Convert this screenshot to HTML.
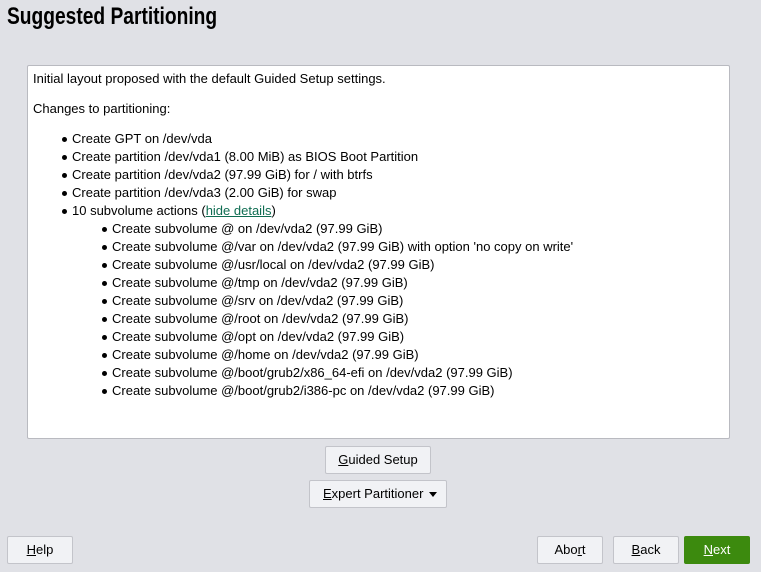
<!DOCTYPE html><html><head><style>
body{margin:0;width:761px;height:572px;background:#e0e1e6;font-family:"Liberation Sans",sans-serif;font-size:13px;color:#000;position:relative;overflow:hidden}
h1{position:absolute;left:7px;top:3px;margin:0;font-size:24px;font-weight:bold;transform:scaleX(.8);transform-origin:left top;white-space:nowrap}
.box{position:absolute;left:27px;top:65px;width:701px;height:372px;background:#fff;border:1px solid #b9bac0;border-radius:2px}
.t{position:absolute;white-space:nowrap;line-height:18px}
.b:before{content:"";position:absolute;left:-10px;top:7px;width:5px;height:5px;border-radius:50%;background:#000}
a{color:#0f6d52;text-decoration:underline}
.btn{position:absolute;box-sizing:border-box;border:1px solid #c3c4ca;border-radius:2px;background:#f1f2f5;text-align:center;line-height:26px;font-size:13px}
u{text-decoration:underline}
</style></head><body>
<h1>Suggested Partitioning</h1>
<div class="box"></div>
<div class="t" style="left:33px;top:70px">Initial layout proposed with the default Guided Setup settings.</div>
<div class="t" style="left:33px;top:100px">Changes to partitioning:</div>
<div class="t b" style="left:72px;top:130px">Create GPT on /dev/vda</div>
<div class="t b" style="left:72px;top:148px">Create partition /dev/vda1 (8.00 MiB) as BIOS Boot Partition</div>
<div class="t b" style="left:72px;top:166px">Create partition /dev/vda2 (97.99 GiB) for / with btrfs</div>
<div class="t b" style="left:72px;top:184px">Create partition /dev/vda3 (2.00 GiB) for swap</div>
<div class="t b" style="left:72px;top:202px">10 subvolume actions (<a>hide details</a>)</div>
<div class="t b" style="left:112px;top:220px">Create subvolume @ on /dev/vda2 (97.99 GiB)</div>
<div class="t b" style="left:112px;top:238px">Create subvolume @/var on /dev/vda2 (97.99 GiB) with option 'no copy on write'</div>
<div class="t b" style="left:112px;top:256px">Create subvolume @/usr/local on /dev/vda2 (97.99 GiB)</div>
<div class="t b" style="left:112px;top:274px">Create subvolume @/tmp on /dev/vda2 (97.99 GiB)</div>
<div class="t b" style="left:112px;top:292px">Create subvolume @/srv on /dev/vda2 (97.99 GiB)</div>
<div class="t b" style="left:112px;top:310px">Create subvolume @/root on /dev/vda2 (97.99 GiB)</div>
<div class="t b" style="left:112px;top:328px">Create subvolume @/opt on /dev/vda2 (97.99 GiB)</div>
<div class="t b" style="left:112px;top:346px">Create subvolume @/home on /dev/vda2 (97.99 GiB)</div>
<div class="t b" style="left:112px;top:364px">Create subvolume @/boot/grub2/x86_64-efi on /dev/vda2 (97.99 GiB)</div>
<div class="t b" style="left:112px;top:382px">Create subvolume @/boot/grub2/i386-pc on /dev/vda2 (97.99 GiB)</div>
<div class="btn" style="left:325px;top:446px;width:106px;height:28px"><u>G</u>uided Setup</div>
<div class="btn" style="left:309px;top:480px;width:138px;height:28px;text-align:left;padding-left:13px"><u>E</u>xpert Partitioner <span style="position:absolute;right:9px;top:11px;border:4px solid transparent;border-top:5px solid #000;border-bottom:0"></span></div>
<div class="btn" style="left:7px;top:536px;width:66px;height:28px"><u>H</u>elp</div>
<div class="btn" style="left:537px;top:536px;width:66px;height:28px">Abo<u>r</u>t</div>
<div class="btn" style="left:613px;top:536px;width:66px;height:28px"><u>B</u>ack</div>
<div class="btn" style="left:684px;top:536px;width:66px;height:28px;background:#3c8a0e;border-color:#3c8a0e;color:#fff"><u>N</u>ext</div>
</body></html>
